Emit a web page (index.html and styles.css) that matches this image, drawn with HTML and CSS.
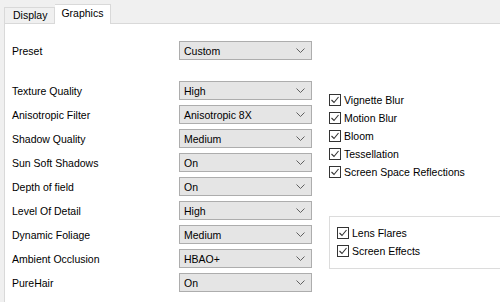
FILE: index.html
```html
<html>

<head>
  <link rel="stylesheet" href="styles.css">
</head>

<body>
  <div class="tabs">
    <div class="tab">Display</div>
    <div class="tab active">Graphics</div>
  </div>

  <div class="panel">
    <div class="settings">
      <div class="row preset">
        <span class="label">Preset</span>
        <div class="select">Custom<svg class="chev" width="9" height="5" viewBox="0 0 9 5"><path d="M0.5 0.5 L4.5 4.5 L8.5 0.5" /></svg></div>
      </div>
      <div class="row">
        <span class="label">Texture Quality</span>
        <div class="select">High<svg class="chev" width="9" height="5" viewBox="0 0 9 5"><path d="M0.5 0.5 L4.5 4.5 L8.5 0.5" /></svg></div>
      </div>
      <div class="row">
        <span class="label">Anisotropic Filter</span>
        <div class="select">Anisotropic 8X<svg class="chev" width="9" height="5" viewBox="0 0 9 5"><path d="M0.5 0.5 L4.5 4.5 L8.5 0.5" /></svg></div>
      </div>
      <div class="row">
        <span class="label">Shadow Quality</span>
        <div class="select">Medium<svg class="chev" width="9" height="5" viewBox="0 0 9 5"><path d="M0.5 0.5 L4.5 4.5 L8.5 0.5" /></svg></div>
      </div>
      <div class="row">
        <span class="label">Sun Soft Shadows</span>
        <div class="select">On<svg class="chev" width="9" height="5" viewBox="0 0 9 5"><path d="M0.5 0.5 L4.5 4.5 L8.5 0.5" /></svg></div>
      </div>
      <div class="row">
        <span class="label">Depth of field</span>
        <div class="select">On<svg class="chev" width="9" height="5" viewBox="0 0 9 5"><path d="M0.5 0.5 L4.5 4.5 L8.5 0.5" /></svg></div>
      </div>
      <div class="row">
        <span class="label">Level Of Detail</span>
        <div class="select">High<svg class="chev" width="9" height="5" viewBox="0 0 9 5"><path d="M0.5 0.5 L4.5 4.5 L8.5 0.5" /></svg></div>
      </div>
      <div class="row">
        <span class="label">Dynamic Foliage</span>
        <div class="select">Medium<svg class="chev" width="9" height="5" viewBox="0 0 9 5"><path d="M0.5 0.5 L4.5 4.5 L8.5 0.5" /></svg></div>
      </div>
      <div class="row">
        <span class="label">Ambient Occlusion</span>
        <div class="select">HBAO+<svg class="chev" width="9" height="5" viewBox="0 0 9 5"><path d="M0.5 0.5 L4.5 4.5 L8.5 0.5" /></svg></div>
      </div>
      <div class="row">
        <span class="label">PureHair</span>
        <div class="select">On<svg class="chev" width="9" height="5" viewBox="0 0 9 5"><path d="M0.5 0.5 L4.5 4.5 L8.5 0.5" /></svg></div>
      </div>
    </div>

    <div class="effects">
      <div class="checks">
        <div class="check"><span class="box"><svg width="10" height="10" viewBox="0 0 10 10"><path d="M1.5 5 L4 7.5 L8.5 2" /></svg></span>Vignette Blur</div>
        <div class="check"><span class="box"><svg width="10" height="10" viewBox="0 0 10 10"><path d="M1.5 5 L4 7.5 L8.5 2" /></svg></span>Motion Blur</div>
        <div class="check"><span class="box"><svg width="10" height="10" viewBox="0 0 10 10"><path d="M1.5 5 L4 7.5 L8.5 2" /></svg></span>Bloom</div>
        <div class="check"><span class="box"><svg width="10" height="10" viewBox="0 0 10 10"><path d="M1.5 5 L4 7.5 L8.5 2" /></svg></span>Tessellation</div>
        <div class="check"><span class="box"><svg width="10" height="10" viewBox="0 0 10 10"><path d="M1.5 5 L4 7.5 L8.5 2" /></svg></span>Screen Space Reflections</div>
      </div>
      <div class="group">
        <div class="check"><span class="box"><svg width="10" height="10" viewBox="0 0 10 10"><path d="M1.5 5 L4 7.5 L8.5 2" /></svg></span>Lens Flares</div>
        <div class="check"><span class="box"><svg width="10" height="10" viewBox="0 0 10 10"><path d="M1.5 5 L4 7.5 L8.5 2" /></svg></span>Screen Effects</div>
      </div>
    </div>
  </div>
</body>

</html>
```

FILE: styles.css
```css
body {
  margin: 0;
  padding: 0;
  height: 100vh;
  display: flex;
  flex-direction: column;
  background-color: #f0f0f0;
  font-family: "Liberation Sans", Arial, sans-serif;
  font-size: 10.5px;
  color: #000000;
  overflow: hidden;
}

.tabs {
  display: flex;
  align-items: flex-end;
  height: 23px;
  padding-left: 4px;
}

.tab {
  height: 15px;
  line-height: 14px;
  padding: 0 7px 0 8px;
  border: 1px solid #d9d9d9;
  border-bottom: none;
  background-color: #f0f0f0;
  position: relative;
  z-index: 1;
}

.tab.active {
  height: 19px;
  line-height: 17px;
  margin-bottom: -1px;
  padding: 0 7px 0 6px;
  background-color: #ffffff;
  border-left: none;
}

.panel {
  flex: 1;
  display: flex;
  margin-left: 4px;
  padding: 17px 0 0 7px;
  background-color: #ffffff;
  border-top: 1px solid #d9d9d9;
  border-left: 1px solid #d9d9d9;
}

.settings {
  display: flex;
  flex-direction: column;
  width: 300px;
}

.row {
  display: flex;
  align-items: center;
  height: 19px;
  margin-bottom: 5px;
}

.row.preset {
  margin-bottom: 21px;
}

.label {
  width: 167px;
}

.select {
  display: flex;
  align-items: center;
  justify-content: space-between;
  box-sizing: border-box;
  width: 133px;
  height: 19px;
  padding: 0 6px 0 4px;
  background-color: #e5e5e5;
  border: 1px solid #adadad;
}

.chev path {
  fill: none;
  stroke: #606060;
  stroke-width: 1;
}

.effects {
  flex: 1;
  display: flex;
  flex-direction: column;
  padding: 50px 0 0 17px;
}

.check {
  display: flex;
  align-items: center;
  height: 18px;
}

.box {
  display: flex;
  align-items: center;
  justify-content: center;
  box-sizing: border-box;
  width: 12px;
  height: 12px;
  margin-right: 3px;
  border: 1px solid #333333;
  background-color: #ffffff;
}

.box path {
  fill: none;
  stroke: #333333;
  stroke-width: 1.1;
}

.group {
  margin-top: 35px;
  padding: 7px 0 8px 7px;
  border: 1px solid #dcdcdc;
  border-right: none;
}
```
